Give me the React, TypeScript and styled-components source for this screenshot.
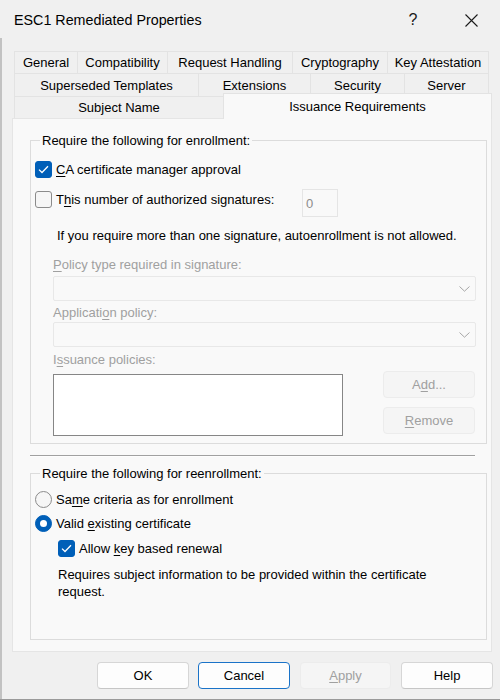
import React from 'react';
import styled, { createGlobalStyle } from 'styled-components';

const GlobalStyle = createGlobalStyle`
  html, body {
    margin: 0;
    padding: 0;
    background: #f0f0f0;
  }

  body {
    font-family: 'Segoe UI', 'Liberation Sans', Arial, sans-serif;
    font-size: 13px;
    color: #000;
  }

  * {
    box-sizing: border-box;
  }
`;

interface TabDef {
  label: string;
  width: number;
  selected?: boolean;
}

const tabRows: TabDef[][] = [
  [
    { label: 'General', width: 63 },
    { label: 'Compatibility', width: 90 },
    { label: 'Request Handling', width: 125 },
    { label: 'Cryptography', width: 95 },
    { label: 'Key Attestation', width: 102 },
  ],
  [
    { label: 'Superseded Templates', width: 184 },
    { label: 'Extensions', width: 112 },
    { label: 'Security', width: 94 },
    { label: 'Server', width: 85 },
  ],
  [
    { label: 'Subject Name', width: 209 },
    { label: 'Issuance Requirements', width: 269, selected: true },
  ],
];

function CheckMark() {
  return (
    <svg width="11" height="9" viewBox="0 0 11 9">
      <path d="M1 4.6 L4 7.5 L10 1.3" fill="none" stroke="#fff" strokeWidth="1.3" />
    </svg>
  );
}

function Chevron() {
  return (
    <svg width="11" height="6" viewBox="0 0 11 6">
      <path d="M0.5 0.5 L5.5 5.2 L10.5 0.5" fill="none" stroke="#a6a6a6" strokeWidth="1" />
    </svg>
  );
}

function CloseGlyph() {
  return (
    <svg width="13" height="13" viewBox="0 0 13 13">
      <path d="M0.5 0.5 L12.5 12.5 M12.5 0.5 L0.5 12.5" stroke="#1a1a1a" strokeWidth="1.1" />
    </svg>
  );
}

function Checkbox({ checked, children, width }: { checked?: boolean; children: React.ReactNode; width?: number }) {
  return (
    <CheckOption $width={width}>
      <CheckBox $checked={checked}>{checked && <CheckMark />}</CheckBox>
      <span>{children}</span>
    </CheckOption>
  );
}

function Radio({ checked, children }: { checked?: boolean; children: React.ReactNode }) {
  return (
    <CheckOption>
      <RadioCircle $checked={checked}>{checked && <RadioDot />}</RadioCircle>
      <span>{children}</span>
    </CheckOption>
  );
}

export default function App() {
  return (
    <>
      <GlobalStyle />
      <Window>
        <TitleBar>
          <Title>ESC1 Remediated Properties</Title>
          <TitleButton>?</TitleButton>
          <TitleButton>
            <CloseGlyph />
          </TitleButton>
        </TitleBar>

        <Body>
          <TabStrip>
            {tabRows.map((row, i) => (
              <TabRow key={i} $last={i === tabRows.length - 1}>
                {row.map((tab) => (
                  <Tab key={tab.label} $width={tab.width} $selected={tab.selected} $tall={i === 1}>
                    {tab.label}
                  </Tab>
                ))}
              </TabRow>
            ))}
          </TabStrip>

          <Page>
            <Group>
              <Legend>Require the following for enrollment:</Legend>
              <OptionRow $mt={11}>
                <Checkbox checked>
                  <Key>C</Key>A certificate manager approval
                </Checkbox>
              </OptionRow>
              <SignatureRow>
                <Checkbox width={267}>
                  T<Key>h</Key>is number of authorized signatures:
                </Checkbox>
                <NumberBox>0</NumberBox>
              </SignatureRow>
              <InfoText>If you require more than one signature, autoenrollment is not allowed.</InfoText>

              <Indented>
                <FieldLabel $mt={12}>
                  <Key>P</Key>olicy type required in signature:
                </FieldLabel>
                <Select $mt={3}>
                  <Chevron />
                </Select>
                <FieldLabel $mt={3}>
                  Applicati<Key>o</Key>n policy:
                </FieldLabel>
                <Select $mt={1}>
                  <Chevron />
                </Select>
                <FieldLabel $mt={4}>
                  I<Key>s</Key>suance policies:
                </FieldLabel>
                <PolicyRow>
                  <ListBox />
                  <ButtonColumn>
                    <DialogButton $disabled>
                      A<Key>d</Key>d...
                    </DialogButton>
                    <DialogButton $disabled>
                      <Key>R</Key>emove
                    </DialogButton>
                  </ButtonColumn>
                </PolicyRow>
              </Indented>
            </Group>

            <Separator />

            <Group $bottom={39} $mt={8}>
              <Legend>Require the following for reenrollment:</Legend>
              <OptionRow $mt={8}>
                <Radio>
                  Sa<Key>m</Key>e criteria as for enrollment
                </Radio>
              </OptionRow>
              <OptionRow $mt={5}>
                <Radio checked>
                  Valid <Key>e</Key>xisting certificate
                </Radio>
              </OptionRow>
              <SubOptions>
                <OptionRow $mt={6}>
                  <Checkbox checked>
                    Allow <Key>k</Key>ey based renewal
                  </Checkbox>
                </OptionRow>
                <Note>
                  Requires subject information to be provided within the certificate request.
                </Note>
              </SubOptions>
            </Group>
          </Page>

          <Footer>
            <DialogButton>OK</DialogButton>
            <DialogButton $focused>Cancel</DialogButton>
            <DialogButton $disabled $width={91}>
              <Key>A</Key>pply
            </DialogButton>
            <DialogButton>Help</DialogButton>
          </Footer>
        </Body>
      </Window>
    </>
  );
}

const Window = styled.div`
  width: 500px;
  height: 700px;
  background: #f0f0f0;
  display: flex;
  flex-direction: column;
  border-bottom: 1px solid #9a9a9a;
  overflow: hidden;
`;

const TitleBar = styled.div`
  height: 38px;
  display: flex;
  align-items: center;
  padding-left: 14px;
  flex-shrink: 0;
`;

const Title = styled.div`
  flex: 1;
  font-size: 14.3px;
  color: #000;
  padding-top: 2px;
`;

const TitleButton = styled.div`
  width: 58px;
  height: 38px;
  display: flex;
  align-items: center;
  justify-content: center;
  font-size: 16px;
  color: #1a1a1a;
  padding-top: 2px;
`;

const Body = styled.div`
  flex: 1;
  border-left: 2px solid #c2c2c2;
  padding: 13px 8px 0 10px;
  display: flex;
  flex-direction: column;
`;

const TabStrip = styled.div`
  padding-left: 2px;
  display: flex;
  flex-direction: column;
`;

const TabRow = styled.div<{ $last?: boolean }>`
  display: flex;
  align-items: flex-end;
  margin-top: ${(p) => (p.$last ? '-3px' : '0')};
  height: ${(p) => (p.$last ? '25px' : 'auto')};
`;

const Tab = styled.div<{ $width: number; $selected?: boolean; $tall?: boolean }>`
  width: ${(p) => p.$width}px;
  height: ${(p) => (p.$selected ? '26px' : p.$tall ? '23px' : '22px')};
  margin-bottom: ${(p) => (p.$selected ? '-1px' : '0')};
  display: flex;
  align-items: center;
  justify-content: center;
  background: ${(p) => (p.$selected ? '#f9f9f9' : '#f0f0f0')};
  border: 1px solid #e3e3e3;
  border-bottom: none;
  border-right: none;
  font-size: 13px;
  color: #000;
  white-space: nowrap;
  position: relative;
  z-index: ${(p) => (p.$selected ? 2 : 0)};

  &:last-child {
    border-right: 1px solid #e3e3e3;
  }
`;

const Page = styled.div`
  height: 534px;
  background: #f9f9f9;
  border: 1px solid #e5e5e5;
  padding: 13px 4px 0 17px;
  position: relative;
  z-index: 1;
`;

const Group = styled.fieldset<{ $bottom?: number; $mt?: number }>`
  margin: ${(p) => p.$mt ?? 0}px 0 0 0;
  padding: 0 10px ${(p) => p.$bottom ?? 7}px 4px;
  border: 1px solid #dcdcdc;
  min-width: 0;
`;

const Legend = styled.legend`
  padding: 0 2px;
  margin-left: 5px;
  line-height: 17px;
  font-size: 13px;
  color: #000;
`;

const Key = styled.span`
  text-decoration: underline;
  text-underline-offset: 2px;
  text-decoration-thickness: 1px;
`;

const OptionRow = styled.div<{ $mt: number }>`
  margin-top: ${(p) => p.$mt}px;
  display: flex;
`;

const CheckOption = styled.div<{ $width?: number }>`
  display: flex;
  align-items: center;
  gap: 4px;
  height: 19px;
  line-height: 17px;
  width: ${(p) => (p.$width ? `${p.$width}px` : 'auto')};
  flex-shrink: 0;
`;

const CheckBox = styled.div<{ $checked?: boolean }>`
  width: 17px;
  height: 17px;
  border-radius: 3px;
  display: flex;
  align-items: center;
  justify-content: center;
  background: ${(p) => (p.$checked ? '#005fb8' : '#f6f6f6')};
  border: 1px solid ${(p) => (p.$checked ? '#005fb8' : '#8b8b8b')};
  flex-shrink: 0;
`;

const RadioCircle = styled.div<{ $checked?: boolean }>`
  width: 17px;
  height: 17px;
  border-radius: 50%;
  display: flex;
  align-items: center;
  justify-content: center;
  background: ${(p) => (p.$checked ? '#005fb8' : '#f6f6f6')};
  border: 1px solid ${(p) => (p.$checked ? '#005fb8' : '#8b8b8b')};
  flex-shrink: 0;
`;

const RadioDot = styled.div`
  width: 7px;
  height: 7px;
  border-radius: 50%;
  background: #fff;
`;

const SignatureRow = styled.div`
  margin-top: 10px;
  height: 28px;
  display: flex;
  align-items: flex-start;

  & > ${CheckOption} {
    margin-top: 1px;
  }
`;

const NumberBox = styled.div`
  width: 36px;
  height: 28px;
  border: 1px solid #e5e5e5;
  background: #f9f9f9;
  color: #8c8c8c;
  display: flex;
  align-items: center;
  padding-left: 3px;
`;

const InfoText = styled.div`
  margin-top: 10px;
  padding-left: 22px;
  line-height: 17px;
`;

const Indented = styled.div`
  padding-left: 18px;
`;

const FieldLabel = styled.div<{ $mt: number }>`
  margin-top: ${(p) => p.$mt}px;
  line-height: 17px;
  color: #a0a0a0;
`;

const Select = styled.div<{ $mt: number }>`
  margin-top: ${(p) => p.$mt}px;
  width: 423px;
  height: 25px;
  border: 1px solid #e8e8e8;
  border-radius: 2px;
  background: #f9f9f9;
  display: flex;
  align-items: center;
  justify-content: flex-end;
  padding-right: 5px;
`;

const PolicyRow = styled.div`
  margin-top: 3px;
  width: 422px;
  display: flex;
  justify-content: space-between;
  align-items: flex-start;
`;

const ListBox = styled.div`
  margin-top: 3px;
  width: 290px;
  height: 62px;
  background: #fff;
  border: 1px solid #868686;
`;

const ButtonColumn = styled.div`
  display: flex;
  flex-direction: column;
  gap: 9px;
`;

const DialogButton = styled.div<{ $disabled?: boolean; $focused?: boolean; $width?: number }>`
  width: ${(p) => p.$width ?? 92}px;
  height: 27px;
  display: flex;
  align-items: center;
  justify-content: center;
  border-radius: 4px;
  font-size: 13px;
  color: ${(p) => (p.$disabled ? '#a0a0a0' : '#000')};
  background: ${(p) => (p.$disabled ? '#f5f5f5' : '#fdfdfd')};
  border: 1px solid
    ${(p) => (p.$focused ? '#1a73c8' : p.$disabled ? '#ececec' : '#d6d6d6')};
  border-bottom-color: ${(p) => (p.$focused ? '#1a73c8' : p.$disabled ? '#ececec' : '#c6c6c6')};
`;

const Separator = styled.div`
  margin-top: 11px;
  width: 445px;
  border-top: 1px solid #a0a0a0;
  border-bottom: 1px solid #fdfdfd;
`;

const SubOptions = styled.div`
  padding-left: 23px;
`;

const Note = styled.div`
  margin-top: 8px;
  max-width: 425px;
  line-height: 17px;
`;

const Footer = styled.div`
  margin-top: 10px;
  margin-right: -1px;
  display: flex;
  justify-content: flex-end;
  gap: 10px;

  & > div:first-child {
    margin-right: -1px;
  }
`;
